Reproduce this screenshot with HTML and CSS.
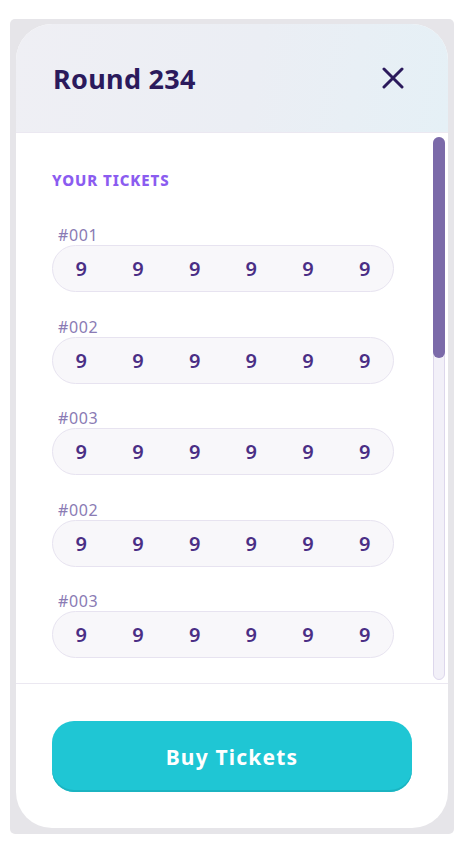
FILE: index.html
```html
<!DOCTYPE html>
<html>
<head>
    <meta charset="UTF-8">
    <title>Round 234</title>
    <link rel="stylesheet" href="styles.css">
</head>
<body>
    <div class="modal-frame">
        <div class="modal-card">
            <div class="modal-header">
                <div class="modal-title">Round 234</div>
                <div class="modal-close">
                    <svg width="22" height="22" viewBox="0 0 22 22">
                        <path d="M2 2 L20 20 M20 2 L2 20" stroke="#2b1a5c" stroke-width="3" stroke-linecap="round" fill="none"/>
                    </svg>
                </div>
            </div>
            <div class="modal-body">
                <div class="ticket-list">
                    <div class="ticket-heading">YOUR TICKETS</div>
                    <div class="ticket">
                        <div class="ticket-id">#001</div>
                        <div class="ticket-numbers">
                            <span>9</span><span>9</span><span>9</span><span>9</span><span>9</span><span>9</span>
                        </div>
                    </div>
                    <div class="ticket">
                        <div class="ticket-id">#002</div>
                        <div class="ticket-numbers">
                            <span>9</span><span>9</span><span>9</span><span>9</span><span>9</span><span>9</span>
                        </div>
                    </div>
                    <div class="ticket">
                        <div class="ticket-id">#003</div>
                        <div class="ticket-numbers">
                            <span>9</span><span>9</span><span>9</span><span>9</span><span>9</span><span>9</span>
                        </div>
                    </div>
                    <div class="ticket">
                        <div class="ticket-id">#002</div>
                        <div class="ticket-numbers">
                            <span>9</span><span>9</span><span>9</span><span>9</span><span>9</span><span>9</span>
                        </div>
                    </div>
                    <div class="ticket">
                        <div class="ticket-id">#003</div>
                        <div class="ticket-numbers">
                            <span>9</span><span>9</span><span>9</span><span>9</span><span>9</span><span>9</span>
                        </div>
                    </div>
                </div>
                <div class="scroll-track">
                    <div class="scroll-thumb"></div>
                </div>
            </div>
            <div class="modal-footer">
                <div class="buy-btn">Buy Tickets</div>
            </div>
        </div>
    </div>
</body>
</html>
```

FILE: styles.css
```css
*{
    margin: 0;
    padding: 0;
    box-sizing: border-box;
    font-family: "Noto Sans", Lato, sans-serif;
}
html,body{
    width: 100%;
    height: 100%;
    background-color: #ffffff;
}
.modal-frame{
    width: 444px;
    height: 815px;
    margin: 19px 0 0 10px;
    padding: 5px 6px 6px 6px;
    background-color: #e6e5e9;
    border-radius: 5px;
}
.modal-card{
    display: flex;
    flex-direction: column;
    height: 100%;
    background-color: #ffffff;
    border-radius: 36px;
    overflow: hidden;
}
.modal-header{
    display: flex;
    justify-content: space-between;
    align-items: center;
    height: 109px;
    padding: 0 44px 0 37px;
    background: linear-gradient(100deg, #efeff4 0%, #ebeef4 55%, #e5f0f6 100%);
    border-bottom: 1px solid #ebe8f1;
}
.modal-title{
    font-size: 27px;
    font-weight: 700;
    letter-spacing: 0.3px;
    color: #2b1a5c;
}
.modal-close{
    width: 22px;
    height: 22px;
}
.modal-body{
    display: flex;
    height: 551px;
    border-bottom: 1px solid #ebe8f1;
}
.ticket-list{
    flex: 1;
    padding: 38px 0 0 36px;
    overflow: hidden;
}
.ticket-heading{
    font-size: 15px;
    font-weight: 800;
    letter-spacing: 0.9px;
    line-height: 18px;
    color: #8b5cf0;
    margin-bottom: 37px;
}
.ticket{
    margin-bottom: 25.5px;
}
.ticket-id{
    padding-left: 6px;
    font-size: 16px;
    letter-spacing: 0.6px;
    line-height: 19px;
    color: #8a7bb4;
}
.ticket-numbers{
    display: grid;
    grid-template-columns: repeat(6, 1fr);
    width: 342px;
    height: 47px;
    align-items: center;
    background-color: #f8f7fa;
    border: 1px solid #e7e3f0;
    border-radius: 24px;
}
.ticket-numbers span{
    text-align: center;
    font-size: 20px;
    font-weight: 600;
    color: #4a2e85;
}
.scroll-track{
    width: 12px;
    margin: 4px 3px 3px 0;
    background-color: #f2f0f8;
    border: 1px solid #ddd7ec;
    border-radius: 6px;
}
.scroll-thumb{
    height: 221px;
    margin: -1px;
    background-color: #7b6aa9;
    border-radius: 6px;
}
.modal-footer{
    flex: 1;
    padding: 37px 36px 0 36px;
}
.buy-btn{
    height: 71px;
    line-height: 72px;
    text-align: center;
    font-size: 21px;
    font-weight: 700;
    letter-spacing: 1.2px;
    color: #ffffff;
    background-color: #1fc6d4;
    border-radius: 22px;
    box-shadow: inset 0 -2px 0 #1bb4c1;
}
```
